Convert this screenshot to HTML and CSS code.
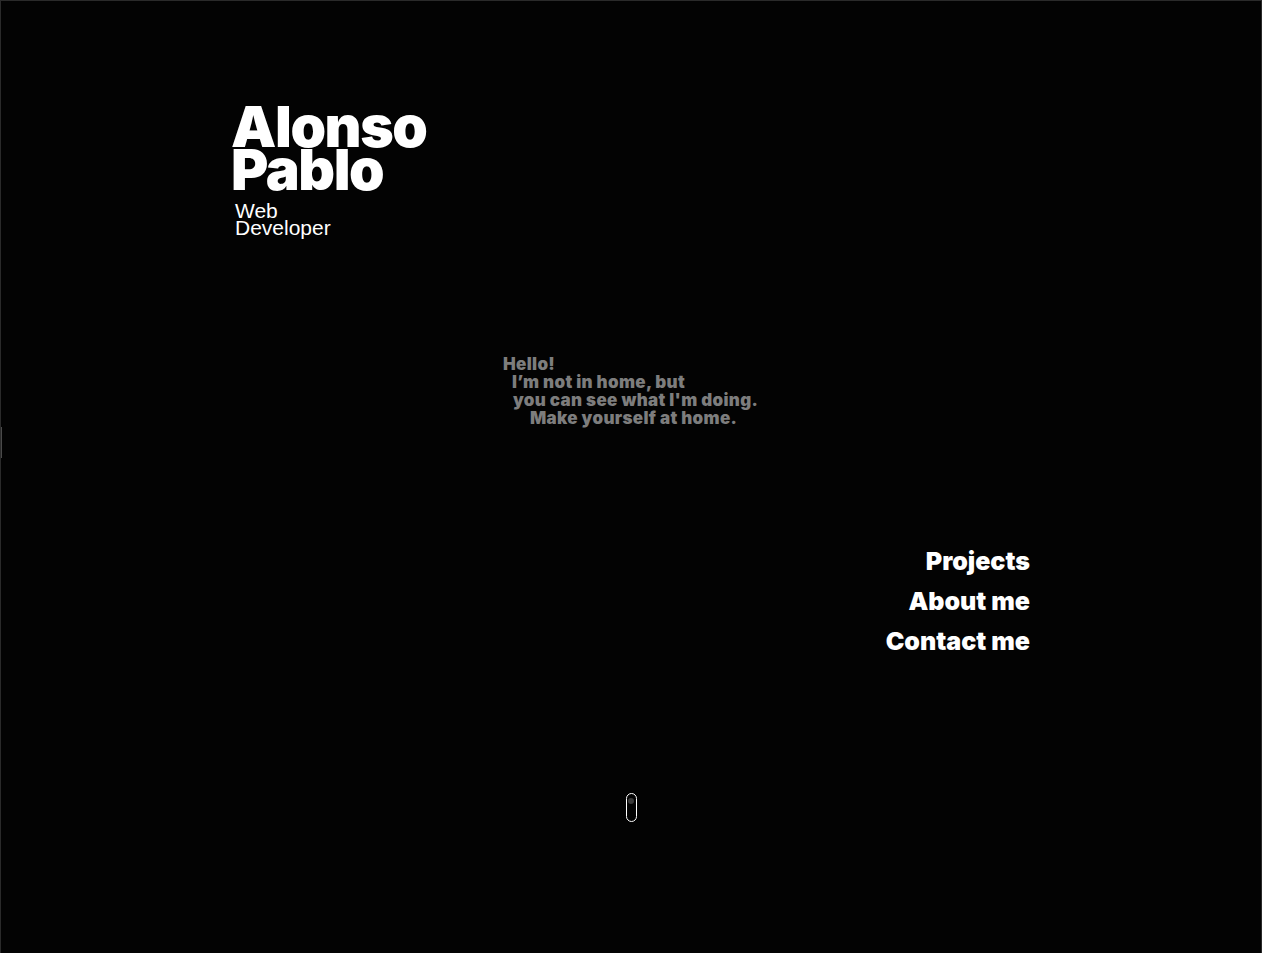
FILE: index.html
```html
<!DOCTYPE html>
<html lang="en">
<head>
<meta charset="utf-8">
<title>Alonso Pablo</title>
<link rel="stylesheet" href="styles.css">
</head>
<body>
<div class="page">
  <header class="hero">
    <h1 class="name">Alonso<br>Pablo</h1>
    <p class="role">Web<br>Developer</p>
  </header>
  <section class="greeting">
    <p class="line l1">Hello!</p>
    <p class="line l2">I’m not in home, but</p>
    <p class="line l3">you can see what I'm doing.</p>
    <p class="line l4">Make yourself at home.</p>
  </section>
  <nav class="menu">
    <a href="#projects">Projects</a>
    <a href="#about">About me</a>
    <a href="#contact">Contact me</a>
  </nav>
  <div class="scroll">
    <span class="mouse"><span class="wheel"></span></span>
  </div>
  <span class="edge-thumb"></span>
</div>
</body>
</html>
```
FILE: styles.css
```css
* { box-sizing: border-box; }
html, body { margin: 0; padding: 0; background: #000; }
.page {
  position: relative;
  width: 1262px;
  height: 953px;
  background: #030303;
  border-top: 1px solid #2a2a2a;
  border-left: 1px solid #2a2a2a;
  border-right: 1px solid #2a2a2a;
  overflow: hidden;
  display: flex;
  flex-direction: column;
}
.hero {
  padding: 104px 0 0 230px;
}
.name {
  margin: 0;
  font-family: Inter, "Liberation Sans", sans-serif;
  font-weight: 900;
  font-size: 57px;
  line-height: 43px;
  letter-spacing: -1.4px;
  color: #fff;
}
.role {
  margin: 12px 0 0 4px;
  font-family: "Liberation Sans", Arial, sans-serif;
  font-size: 21px;
  line-height: 16.5px;
  color: #fff;
}
.greeting {
  margin: 119px 0 0 502px;
  font-family: Inter, "Liberation Sans", sans-serif;
  font-weight: 900;
  font-size: 17px;
  line-height: 18px;
  letter-spacing: 0.32px;
  color: #7d7d7d;
}
.line { margin: 0; white-space: nowrap; }
.l2 { padding-left: 9px; }
.l3 { padding-left: 10px; }
.l4 { padding-left: 27px; }
.menu {
  margin: 119px 231px 0 0;
  display: flex;
  flex-direction: column;
  align-items: flex-end;
  gap: 10px;
}
.menu a {
  font-family: Inter, "Liberation Sans", sans-serif;
  font-weight: 900;
  font-size: 25px;
  line-height: 30px;
  color: #fff;
  text-decoration: none;
}
.scroll {
  margin-top: 137px;
  display: flex;
  justify-content: center;
}
.mouse {
  width: 11px;
  height: 29px;
  border: 1px solid #fff;
  border-radius: 6px;
  display: flex;
  justify-content: center;
  padding-top: 4px;
}
.wheel {
  width: 6px;
  height: 6px;
  border-radius: 50%;
  background: #3a3a3a;
}
.edge-thumb {
  position: absolute;
  left: -1px;
  top: 426px;
  width: 2px;
  height: 31px;
  background: #4a4a4a;
}
```
